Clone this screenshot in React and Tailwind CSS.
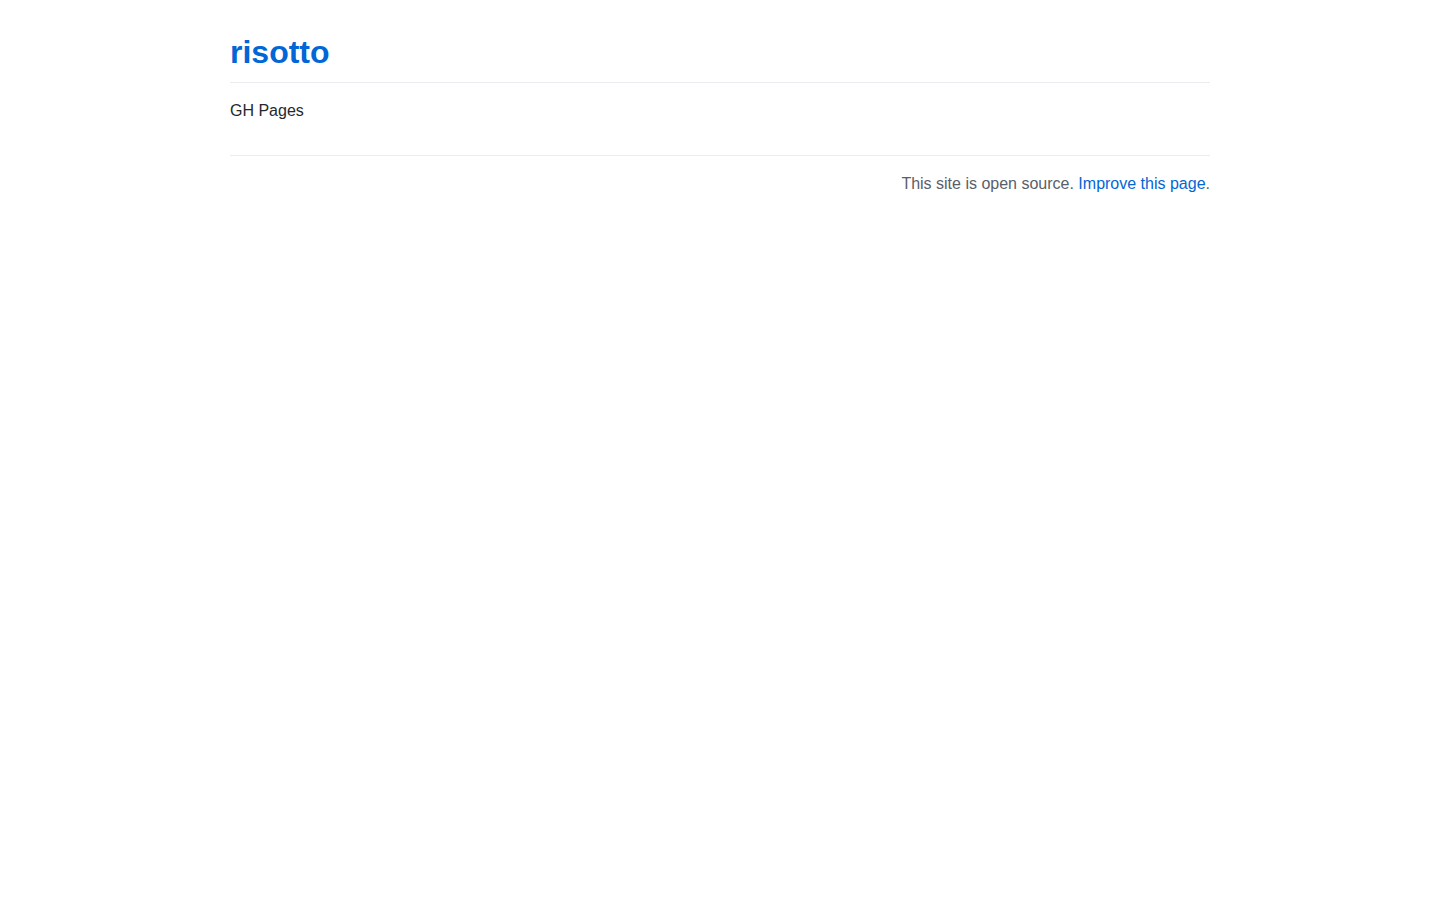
export default function App() {
  return (
    <div className="min-h-screen bg-white" style={{ fontFamily: '"Liberation Sans", Arial, sans-serif' }}>
      <div className="mx-auto max-w-[1012px] px-4 pt-8">
        <h1 className="border-b border-[#eaecef] pb-[9.6px] text-[32px] font-bold leading-[40px]">
          <a href="#" className="text-[#0366d6]">risotto</a>
        </h1>
        <p className="mt-4 text-base leading-6 text-[#24292e]">GH Pages</p>
        <footer className="mt-8 border-t border-[#eaecef] pt-4 text-right text-base leading-6 text-[#586069]">
          This site is open source.{' '}
          <a href="#" className="text-[#0366d6]">Improve this page</a>.
        </footer>
      </div>
    </div>
  );
}
